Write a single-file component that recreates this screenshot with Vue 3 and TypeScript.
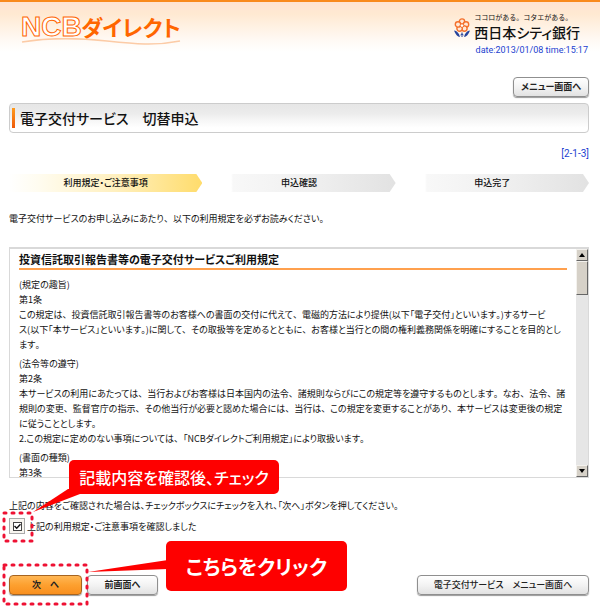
<script setup lang="ts">
import { ref } from 'vue'

interface Clause {
  lines: string[]
}

const agreed = ref(true)
const steps: string[] = ['利用規定・ご注意事項', '申込確認', '申込完了']
const lead = '電子交付サービスのお申し込みにあたり、以下の利用規定を必ずお読みください。'
const clauses: Clause[] = [
  {
    lines: [
      '(規定の趣旨)',
      '第1条',
      'この規定は、投資信託取引報告書等のお客様への書面の交付に代えて、電磁的方法により提供(以下「電子交付」といいます。)するサービ',
      'ス(以下「本サービス」といいます。)に関して、その取扱等を定めるとともに、お客様と当行との間の権利義務関係を明確にすることを目的とし',
      'ます。',
    ],
  },
  {
    lines: [
      '(法令等の遵守)',
      '第2条',
      '本サービスの利用にあたっては、当行およびお客様は日本国内の法令、諸規則ならびにこの規定等を遵守するものとします。なお、法令、諸',
      '規則の変更、監督官庁の指示、その他当行が必要と認めた場合には、当行は、この規定を変更することがあり、本サービスは変更後の規定',
      'に従うこととします。',
      '2.この規定に定めのない事項については、「NCBダイレクトご利用規定」により取扱います。',
    ],
  },
  { lines: ['(書面の種類)', '第3条'] },
]

// Kana are set proportionally while commas and full stops keep their full width.
const pieces = (text: string): string[] => text.split(/([、。])/).filter((s) => s !== '')
const isStop = (s: string): boolean => s === '、' || s === '。'
</script>

<template>
  <div class="page">
    <header class="header">
      <div class="brand">
        <div class="brand-name"><span class="ncb">NCB</span><span class="direct">ダイレクト</span></div>
        <svg class="wave" viewBox="0 0 160 8" preserveAspectRatio="none" aria-hidden="true">
          <path d="M1 4C25 0 58 0 86 3S134 8 159 3" fill="none" stroke="#fccba6" stroke-width="1.6" />
        </svg>
      </div>
      <div class="bank">
        <div class="bank-logo">
          <svg class="emblem" viewBox="0 0 16 20" aria-hidden="true">
            <g fill="#ffe9d8" stroke="#f4702b" stroke-width="1.4">
              <circle cx="8" cy="3.6" r="2.7" />
              <circle cx="12" cy="6.4" r="2.7" />
              <circle cx="10.4" cy="10.6" r="2.7" />
              <circle cx="5.6" cy="10.6" r="2.7" />
              <circle cx="4" cy="6.4" r="2.7" />
            </g>
            <circle cx="8" cy="7.6" r="1.8" fill="#fff" stroke="#f4702b" />
            <path d="M0 12.5Q4.5 13 6 19Q2.3 18.5 0 12.5ZM16 12.5Q11.5 13 10 19Q13.7 18.5 16 12.5Z" fill="#27439b" />
            <path d="M8 14.5v4.5M6.5 17q1.5-2 3 0" fill="none" stroke="#27439b" />
          </svg>
          <div class="bank-text">
            <span class="tagline">ココロがある。コタエがある。</span>
            <span class="bank-name">西日本シティ銀行</span>
          </div>
        </div>
        <div class="date">date:2013/01/08 time:15:17</div>
      </div>
    </header>

    <main class="main">
      <div class="top-action">
        <button type="button" class="btn btn-menu">メニュー画面へ</button>
      </div>
      <h1 class="title">電子交付サービス　切替申込</h1>
      <div class="screen-id">[2-1-3]</div>

      <ol class="steps">
        <li v-for="(step, i) in steps" :key="step" class="step" :class="{ current: i === 0 }">{{ step }}</li>
      </ol>

      <p class="lead"><span v-for="(s, k) in pieces(lead)" :key="k" :class="{ stop: isStop(s) }">{{ s }}</span></p>

      <section class="terms">
        <div class="terms-body">
          <h2 class="terms-title">投資信託取引報告書等の電子交付サービスご利用規定</h2>
          <p v-for="(clause, i) in clauses" :key="i" class="clause">
            <span v-for="line in clause.lines" :key="line" class="line"><span v-for="(s, k) in pieces(line)" :key="k" :class="{ stop: isStop(s) }">{{ s }}</span></span>
          </p>
        </div>
        <div class="scrollbar">
          <button type="button" class="scroll-btn" aria-label="上へ">
            <svg viewBox="0 0 6 4"><path d="M0 4L3 0L6 4Z" /></svg>
          </button>
          <div class="thumb"></div>
          <button type="button" class="scroll-btn scroll-down" aria-label="下へ">
            <svg viewBox="0 0 6 4"><path d="M0 0L3 4L6 0Z" /></svg>
          </button>
        </div>
      </section>

      <div class="confirm">
        <p>上記の内容をご確認された場合は、チェックボックスにチェックを入れ、「次へ」ボタンを押してください。</p>
        <label class="agree">
          <span class="check-frame">
            <input v-model="agreed" type="checkbox" class="check" />
            <svg v-if="agreed" class="tick" viewBox="0 0 7 7" aria-hidden="true"><path d="M0.5 3L2.7 5.2L6.5 1.2" /></svg>
          </span>
          <span>上記の利用規定・ご注意事項を確認しました</span>
        </label>
        <div class="hint hint-check">
          <svg class="hint-mark" viewBox="0 0 90 70" aria-hidden="true">
            <rect class="dots" x="4" y="37" width="28" height="28" />
            <path d="M68 13L33 36L80 18V13Z" fill="#fe0000" />
          </svg>
          <div class="bubble bubble-check">記載内容を確認後、チェック</div>
        </div>
      </div>

      <div class="actions">
        <button type="button" class="btn btn-next">次　へ</button>
        <button type="button" class="btn btn-back">前画面へ</button>
        <button type="button" class="btn btn-service">電子交付サービス　メニュー画面へ</button>
        <div class="hint hint-next">
          <svg class="hint-mark-next" viewBox="0 0 170 44" aria-hidden="true">
            <rect class="dots" x="4" y="3" width="83" height="39" />
            <path d="M88 10L168 -2V7Z" fill="#fe0000" />
          </svg>
          <div class="bubble bubble-next">こちらをクリック</div>
        </div>
      </div>
    </main>
  </div>
</template>

<style>
body {
  margin: 0;
  background: #fff;
}
</style>

<style scoped>
.page {
  font-family: "Noto Sans CJK JP", sans-serif;
  font-feature-settings: "palt";
  font-size: 9px;
  line-height: 15px;
  color: #111;
  white-space: nowrap;
  overflow: hidden;
}
.page * {
  box-sizing: border-box;
}
p,
h1,
h2,
ol {
  margin: 0;
  padding: 0;
}
.stop {
  font-feature-settings: normal;
}
.header {
  display: flex;
  justify-content: space-between;
  height: 77px;
  padding: 10px 12px 0 21px;
  border-top: 2px solid #f98a1d;
  background: linear-gradient(#ffe3d2 0, #ffe9d2 12px, #fff1e2 24px, #fff9f4 38px, #fff 50px) no-repeat;
}
.brand {
  width: 160px;
  padding-top: 2px;
}
.brand-name {
  display: flex;
  align-items: center;
  height: 24px;
  color: #f60;
}
.ncb {
  width: 60px;
  font-family: "Liberation Sans", sans-serif;
  font-size: 28px;
  font-weight: 700;
  color: #fff;
  -webkit-text-stroke: 1px #f60;
}
.direct {
  font-size: 22px;
  font-weight: 700;
}
.wave {
  display: block;
  width: 160px;
  height: 8px;
}
.bank-logo {
  display: flex;
  gap: 4px;
  align-items: center;
  padding-right: 8px;
}
.emblem {
  width: 16px;
  height: 20px;
}
.bank-text {
  display: flex;
  flex-direction: column;
}
.tagline {
  font-size: 7px;
  line-height: 10px;
  font-feature-settings: normal;
}
.bank-name {
  font-size: 14px;
  line-height: 21px;
  font-weight: 500;
}
.date,
.screen-id {
  font-family: Roboto, "Liberation Sans", sans-serif;
  color: #1c3fd0;
  text-align: right;
}
.date {
  font-size: 9px;
}
.main {
  padding: 0 11px 0 9px;
}
.top-action {
  display: flex;
  justify-content: flex-end;
}
.btn {
  height: 20px;
  padding: 0;
  border: 1px solid #8f8f8f;
  border-radius: 4px;
  background: linear-gradient(#fff, #f3f3f3 50%, #e2e2e2);
  box-shadow: 0 1px 1px #999;
  font-family: inherit;
  font-feature-settings: inherit;
  font-size: 9px;
  font-weight: 700;
  line-height: 18px;
  color: #222;
}
.btn-menu {
  width: 76px;
}
.title {
  display: flex;
  align-items: center;
  height: 30px;
  margin-top: 6px;
  padding-left: 2px;
  border: 1px solid #ccc;
  border-radius: 4px;
  background: linear-gradient(#e6e6e6, #ececec 35%, #f5f5f5 55%, #fff 85%);
  font-size: 14px;
  font-weight: 500;
}
.title::before {
  content: "";
  width: 3px;
  height: 20px;
  margin-right: 5px;
  background: linear-gradient(#ff9a1c, #ee5a0a);
}
.screen-id {
  margin-top: 13px;
  font-size: 10px;
}
.steps {
  display: grid;
  grid-template-columns: repeat(3, 1fr);
  margin-top: 13px;
  list-style: none;
}
.step {
  height: 18px;
  line-height: 18px;
  font-weight: 500;
  text-align: center;
  background: linear-gradient(90deg, #fff 15%, #f8f8f8 16%, #f0f0f0 55%, #e2e2e2);
  clip-path: polygon(0 0, calc(100% - 6px) 0, 100% 50%, calc(100% - 6px) 100%, 0 100%);
}
.step.current {
  background: linear-gradient(90deg, #fff, #fffcf0 15%, #fff0bf 55%, #ffdc6c);
}
.lead {
  margin-top: 19px;
}
.terms {
  display: flex;
  height: 231px;
  margin-top: 21px;
  border: 1px solid #d9d9d9;
  border-top-width: 2px;
}
.terms-body {
  flex: 1;
  min-width: 0;
  padding: 2px 9px 0;
  overflow: hidden;
}
.terms-title {
  height: 19px;
  border-bottom: 2px solid #ffa04d;
  font-size: 11px;
  font-weight: 700;
  line-height: 17px;
}
.clause {
  margin-top: 4px;
}
.terms-title + .clause {
  margin-top: 7px;
}
.line {
  display: block;
}
.scrollbar {
  display: flex;
  flex-direction: column;
  width: 12px;
  background: #e6e6e6;
}
.scroll-btn,
.thumb {
  border: 1px solid;
  border-color: #f4f2ee #666 #666 #f4f2ee;
  background: #d6d1c8;
}
.scroll-btn {
  display: flex;
  align-items: center;
  justify-content: center;
  width: 12px;
  height: 12px;
  padding: 0;
}
.scroll-btn svg {
  width: 6px;
  height: 4px;
}
.thumb {
  height: 34px;
}
.scroll-down {
  margin-top: auto;
}
.confirm {
  position: relative;
  padding-top: 20px;
}
.agree {
  display: flex;
  align-items: center;
  gap: 2px;
  height: 16px;
  margin-top: 5px;
}
.check-frame {
  position: relative;
  display: flex;
  align-items: center;
  justify-content: center;
  width: 16px;
  height: 16px;
  border: 1px solid #aaa;
  background: #f7f5f0;
}
.check {
  appearance: none;
  width: 9px;
  height: 9px;
  margin: 0;
  border: 1px solid #444;
  background: #fff;
}
.tick {
  position: absolute;
  width: 7px;
  height: 7px;
  pointer-events: none;
}
.tick path {
  fill: none;
  stroke: #111;
  stroke-width: 1.5;
}
.actions {
  position: relative;
  display: flex;
  align-items: flex-start;
  gap: 5px;
  margin-top: 41px;
  padding-bottom: 13px;
}
.btn-next {
  width: 73px;
  border-color: #a66420;
  background: linear-gradient(#ffb755, #fda02f 50%, #f98f1e);
}
.btn-back {
  width: 71px;
}
.btn-service {
  width: 172px;
  margin-left: auto;
  font-weight: 500;
}
.hint {
  position: absolute;
  left: -9px;
  pointer-events: none;
}
.hint-check {
  top: -18px;
}
.hint-next {
  top: -34px;
}
.hint-mark,
.hint-mark-next {
  position: absolute;
  left: 0;
  overflow: visible;
}
.hint-mark {
  top: 16px;
  width: 90px;
  height: 70px;
}
.hint-mark-next {
  top: 21px;
  width: 170px;
  height: 44px;
}
.dots {
  fill: none;
  stroke: #ee1133;
  stroke-width: 3;
  stroke-linecap: round;
  stroke-dasharray: 2 6;
}
.bubble {
  display: flex;
  align-items: center;
  justify-content: center;
  border-radius: 5px;
  background: #fe0000;
  color: #fff;
}
.bubble-check {
  width: 210px;
  height: 34px;
  margin-left: 69px;
  font-size: 16px;
  font-weight: 500;
}
.bubble-next {
  width: 181px;
  height: 50px;
  margin-left: 166px;
  font-size: 20px;
  font-weight: 700;
}
</style>
